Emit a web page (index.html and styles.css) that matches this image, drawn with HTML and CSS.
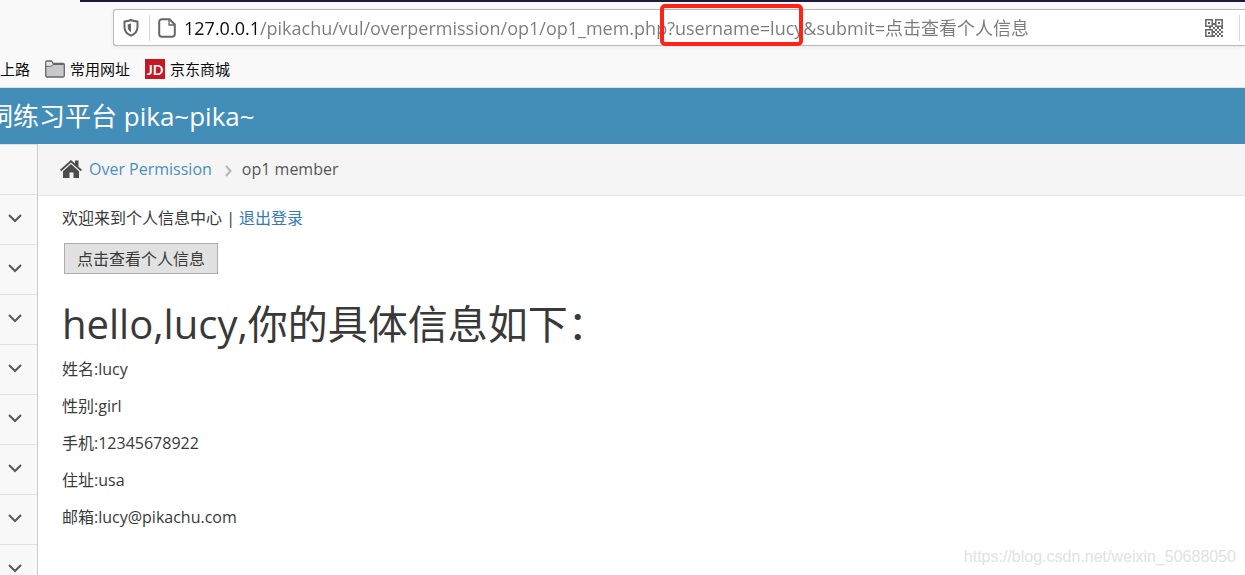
FILE: index.html
```
<!DOCTYPE html>
<html lang="zh-CN">
<head>
<meta charset="utf-8">
<meta name="viewport" content="width=device-width, initial-scale=1">
<title>op1 member</title>
<link rel="stylesheet" href="styles.css">
</head>
<body>
<div class="browser">
  <div class="tab-edge"></div>
  <div class="toolbar">
    <div class="address">
      <svg class="shield" viewBox="0 0 18 20" aria-hidden="true"><path d="M9 2c2 1 4 1.400 6.500 1.500V9c0 4-2.500 7-6.500 8.700C5 16 2.500 13 2.500 9V3.500C5 3.400 7 3 9 2z" fill="none" stroke="#66666a" stroke-width="2" stroke-linejoin="round"/><path d="M9 5.300v9C6.500 12.500 5.700 11 5.700 9V6.300C7 6.200 8 6 9 5.300z" fill="#66666a"/></svg>
      <span class="rule"></span>
      <svg class="page-icon" viewBox="0 0 18 20" aria-hidden="true"><path d="M4 1.200h7.500L16.800 6.500V16a2.800 2.800 0 0 1-2.800 2.800H4A2.800 2.800 0 0 1 1.200 16V4A2.800 2.800 0 0 1 4 1.200z" fill="none" stroke="#66666a" stroke-width="2"/><path d="M11 1.500V7h5.500" fill="none" stroke="#66666a" stroke-width="1.300"/></svg>
      <div class="url-wrap">
        <input class="url" type="text" aria-label="地址" value="127.0.0.1/pikachu/vul/overpermission/op1/op1_mem.php?username=lucy&amp;submit=点击查看个人信息">
        <span class="mark"></span>
      </div>
      <svg class="qr" viewBox="0 0 18 18" aria-hidden="true"><g fill="none" stroke="#66666a" stroke-width="1.500"><path d="M.8.800h6.400v6.400H.800zM10.800.800h6.400v6.400h-6.400zM.800 10.800h6.400v6.400H.800z"/></g><path fill="#66666a" d="M3 3h2v2H3zM13 3h2v2h-2zM3 13h2v2H3zM8 4h2v2H8zM8 8h2v2H8zM4 8h2v1.500H4zM10 10h2v2h-2zM12 8h2v2h-2zM16 8h2v2h-2zM14 10h2v2h-2zM8 12h2v2H8zM12 12h2v2h-2zM16 12h2v2h-2zM10 14h2v2h-2zM14 14h2v2h-2zM8 16h2v2H8zM12 16h2v2h-2zM16 16h2v2h-2z"/></svg>
      <span class="rule"></span>
    </div>
  </div>
  <nav class="bookmarks" aria-label="书签">
    <a href="#">上路</a>
    <a href="#"><svg class="folder" viewBox="0 0 20 18" aria-hidden="true"><path d="M.7 15.500v-13C.7 1.500 1.200 1 2 1h4.500l1.500 2.500h10c.9 0 1.300.5 1.300 1.300v10.700c0 1-.5 1.500-1.300 1.500H2c-.8 0-1.300-.5-1.300-1.500z" fill="#c8c8ca" stroke="#66666a" stroke-width="1.300"/><path d="M1 6.200h5.500L8 4.500h11" fill="none" stroke="#66666a"/><path d="M1.500 5.500V2h4.700l1.300 2-1.300 1.500z" fill="#e6e6e8"/></svg>常用网址</a>
    <a href="#"><span class="jd">JD</span>京东商城</a>
  </nav>
</div>
<header class="banner"><span class="banner-title">洞练习平台 pika~pika~</span></header>
<div class="layout">
  <nav class="side" aria-label="菜单">
    <div class="side-top"></div>
    <button class="side-item" type="button" aria-label="展开"><svg viewBox="0 0 14 10"><path d="M1 2l6 6 6-6"/></svg></button>
    <button class="side-item" type="button" aria-label="展开"><svg viewBox="0 0 14 10"><path d="M1 2l6 6 6-6"/></svg></button>
    <button class="side-item" type="button" aria-label="展开"><svg viewBox="0 0 14 10"><path d="M1 2l6 6 6-6"/></svg></button>
    <button class="side-item" type="button" aria-label="展开"><svg viewBox="0 0 14 10"><path d="M1 2l6 6 6-6"/></svg></button>
    <button class="side-item" type="button" aria-label="展开"><svg viewBox="0 0 14 10"><path d="M1 2l6 6 6-6"/></svg></button>
    <button class="side-item" type="button" aria-label="展开"><svg viewBox="0 0 14 10"><path d="M1 2l6 6 6-6"/></svg></button>
    <button class="side-item" type="button" aria-label="展开"><svg viewBox="0 0 14 10"><path d="M1 2l6 6 6-6"/></svg></button>
    <button class="side-item" type="button" aria-label="展开"><svg viewBox="0 0 14 10"><path d="M1 2l6 6 6-6"/></svg></button>
  </nav>
  <div class="main">
    <nav class="crumbs" aria-label="位置">
      <svg class="home" viewBox="0 0 22 18" aria-hidden="true"><path fill="#4c4c4c" d="M11 0l4 3.600V.5h3.500v6.200L22 9.800l-1.200 1.400L11 2.500l-9.800 8.700L0 9.800zM11 4l8 7.200V18h-5.500v-5.500h-4V18H3v-6.800z"/></svg>
      <a href="#">Over Permission</a>
      <svg class="sep" viewBox="0 0 8 12" aria-hidden="true"><path d="M2 1l4.500 5L2 11"/></svg>
      <span>op1 member</span>
    </nav>
    <main class="content">
      <p class="welcome">欢迎来到个人信息中心 | <a href="#">退出登录</a></p>
      <form class="form"><button class="submit" type="button">点击查看个人信息</button></form>
      <h1>hello,lucy,你的具体信息如下：</h1>
      <p>姓名:lucy</p>
      <p>性别:girl</p>
      <p>手机:12345678922</p>
      <p>住址:usa</p>
      <p>邮箱:lucy@pikachu.com</p>
    </main>
  </div>
</div>
<div class="watermark">https://blog.csdn.net/weixin_50688050</div>
</body>
</html>
```
FILE: styles.css
```
* { box-sizing: border-box; }
html, body { height: 100%; }
body {
  margin: 0;
  display: flex;
  flex-direction: column;
  overflow: hidden;
  background: #fff;
  color: #393939;
  font: 16px/24px "Open Sans", "Noto Sans CJK SC", sans-serif;
}
a { color: #337ab7; text-decoration: none; }
svg { display: block; flex: none; }

.browser {
  flex: none;
  background: #f9f9fa;
  border-bottom: 1px solid #e0e0e1;
}
.tab-edge { height: 2px; margin-left: 80px; background: #1b1a3a; }
.toolbar { padding: 7px 0 0 113px; }
.address {
  display: flex;
  align-items: center;
  height: 37px;
  padding: 0 5px 0 8px;
  border: 1px solid #b8b8ba;
  border-right: 0;
  border-radius: 3px 0 0 3px;
  background: #fff;
  box-shadow: 0 1px 4px rgba(0, 0, 0, .07);
}
.shield { width: 18px; height: 20px; }
.page-icon { width: 18px; height: 20px; margin: 0 8px; }
.rule { flex: none; width: 1px; height: 26px; margin-left: 9px; background: #d7d7db; }
.qr { width: 18px; height: 18px; }
.qr + .rule { margin-left: 16px; }
.url-wrap { position: relative; flex: 1; min-width: 0; }
.url {
  display: block;
  width: 100%;
  height: 32px;
  padding: 0;
  border: 0;
  outline: 0;
  font: 18px/32px "Open Sans", "Noto Sans CJK SC", sans-serif;
  color: transparent;
  background: linear-gradient(90deg, #0c0c0d 76px, #7b7b7d 76px);
  -webkit-background-clip: text;
  background-clip: text;
}
.mark {
  position: absolute;
  left: 476px;
  top: -8px;
  width: 143px;
  height: 42px;
  border: 4px solid #ff2216;
  border-radius: 5px;
}
.bookmarks {
  display: flex;
  align-items: center;
  gap: 15px;
  height: 41px;
  padding-top: 5px;
  font-size: 15px;
}
.bookmarks a { display: flex; align-items: center; gap: 5px; color: #0c0c0d; }
.folder { width: 20px; height: 18px; }
.jd {
  width: 20px;
  height: 20px;
  background: #c81623;
  color: #fff;
  font: bold 14px/22px Lato, sans-serif;
  text-align: center;
}

.banner {
  flex: none;
  display: flex;
  align-items: center;
  height: 56px;
  background: #438eb9;
  color: #fff;
  font-size: 26px;
  line-height: 36px;
  white-space: nowrap;
}
.banner-title { margin-left: -13px; }

.layout { flex: 1; display: flex; min-height: 0; }
.side {
  flex: none;
  width: 38px;
  overflow: hidden;
  background: #f8f8f8;
  border-right: 1px solid #ccc;
}
.side-top { height: 50px; border-top: 1px solid #e0e0e0; }
.side-item {
  display: flex;
  align-items: center;
  width: 100%;
  height: 50px;
  padding: 0 0 4px 8px;
  border: 0;
  border-top: 1px solid #e0e0e0;
  background: none;
}
.side-item svg { width: 14px; height: 10px; }
.side-item path { fill: none; stroke: #585858; stroke-width: 2; }

.main { flex: 1; min-width: 0; }
.crumbs {
  display: flex;
  align-items: center;
  height: 52px;
  padding: 0 22px 2px;
  background: #f5f5f5;
  border-bottom: 1px solid #e5e5e5;
  color: #555;
}
.crumbs a { color: #4c8fbd; }
.home { width: 22px; height: 18px; margin-right: 7px; }
.sep { width: 8px; height: 12px; margin: 4px 10px 0 12px; }
.sep path { fill: none; stroke: #b2b6bf; stroke-width: 2; }

.content { padding: 10px 24px; }
.content p { margin: 0 0 13px; }
.form { padding-left: 2px; }
.submit {
  display: block;
  height: 31px;
  padding: 0 12px;
  border: 1px solid #adadad;
  background: #e1e1e1;
  color: #393939;
  font: 16px/28px "Open Sans", "Noto Sans CJK SC", sans-serif;
}
h1 { margin: 22px 0 5px; font-size: 40px; line-height: 56px; font-weight: 400; }

.watermark {
  position: absolute;
  right: 9px;
  bottom: 6px;
  color: #e2e2e2;
  font: 16px/24px "Liberation Sans", Arial, sans-serif;
}
```
